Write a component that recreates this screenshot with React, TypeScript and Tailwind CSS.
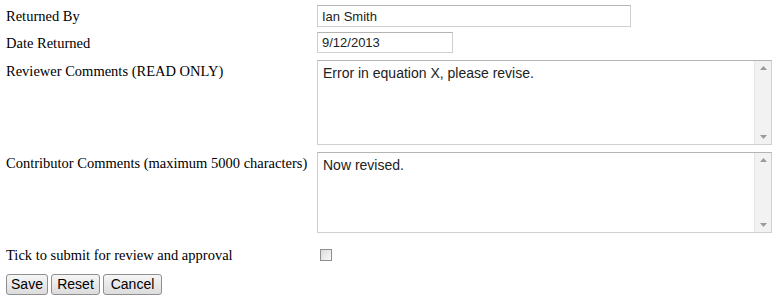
import React, { useState } from 'react';

const labelCls = "font-['Liberation_Serif',serif] text-[14.5px] text-black leading-[18px] whitespace-nowrap";
const boxCls = "border border-[#cfcfcf] border-t-[#b4b4b4] bg-white font-['Liberation_Sans',Arial,sans-serif] text-[13px] text-[#222] outline-none";

const ScrollBar: React.FC = () => (
  <div className="w-[17px] bg-[#f2f2f2] border-l border-[#e4e4e4] flex flex-col justify-between items-center py-[5px]">
    <svg width="7" height="4" viewBox="0 0 7 4"><path d="M0 4 L3.5 0 L7 4 Z" fill="#9a9a9a" /></svg>
    <svg width="7" height="4" viewBox="0 0 7 4"><path d="M0 0 L3.5 4 L7 0 Z" fill="#9a9a9a" /></svg>
  </div>
);

const CommentBox: React.FC<{ value: string; readOnly?: boolean; onChange?: (v: string) => void; height: string }> = ({ value, readOnly, onChange, height }) => (
  <div className={`flex w-[455px] ${height} border border-[#cfcfcf] border-t-[#b4b4b4] bg-white`}>
    <textarea
      className="flex-1 resize-none overflow-hidden outline-none px-[5px] py-[3px] font-['Liberation_Sans',Arial,sans-serif] text-[14px] text-[#222] leading-[18px]"
      value={value}
      readOnly={readOnly}
      onChange={e => onChange && onChange(e.target.value)}
    />
    <ScrollBar />
  </div>
);

const Btn: React.FC<{ label: string; width: string }> = ({ label, width }) => (
  <button className={`${width} h-[21px] border border-[#8f8f8f] rounded-[3px] bg-gradient-to-b from-[#f6f6f6] to-[#dcdcdc] font-['Liberation_Sans',Arial,sans-serif] text-[14px] text-black leading-[19px] text-center`}>
    {label}
  </button>
);

export default function App() {
  const [returnedBy, setReturnedBy] = useState('Ian Smith');
  const [dateReturned, setDateReturned] = useState('9/12/2013');
  const [contrib, setContrib] = useState('Now revised.');
  const [tick, setTick] = useState(false);

  return (
    <div className="w-[780px] h-[303px] bg-white pl-[6px] pt-[5px]">
      <div className="grid grid-cols-[311px_1fr] gap-y-[5px]">
        <div className={`${labelCls} pt-[2px]`}>Returned By</div>
        <input className={`${boxCls} w-[314px] h-[22px] px-[4px]`} value={returnedBy} onChange={e => setReturnedBy(e.target.value)} />

        <div className={`${labelCls} pt-[2px]`}>Date Returned</div>
        <input className={`${boxCls} w-[136px] h-[21px] px-[4px]`} value={dateReturned} onChange={e => setDateReturned(e.target.value)} />

        <div className={`${labelCls} pt-[2px] mt-[2px]`}>Reviewer Comments (READ ONLY)</div>
        <div className="mt-[2px]">
          <CommentBox value="Error in equation X, please revise." readOnly height="h-[85px]" />
        </div>

        <div className={`${labelCls} pt-[2px] mt-[2px]`}>Contributor Comments (maximum 5000 characters)</div>
        <div className="mt-[2px]">
          <CommentBox value={contrib} onChange={setContrib} height="h-[81px]" />
        </div>

        <div className={`${labelCls} mt-[7px] pt-[1px]`}>Tick to submit for review and approval</div>
        <div className="mt-[7px] pl-[3px] pt-[4px]">
          <input type="checkbox" checked={tick} onChange={e => setTick(e.target.checked)} className="w-[12px] h-[12px] m-0 appearance-none border border-[#8e8f8f] bg-gradient-to-br from-[#dcdcdc] to-[#f8f8f8] block" />
        </div>
      </div>
      <div className="flex gap-[3px] mt-[10px]">
        <Btn label="Save" width="w-[42px]" />
        <Btn label="Reset" width="w-[49px]" />
        <Btn label="Cancel" width="w-[59px]" />
      </div>
    </div>
  );
}
